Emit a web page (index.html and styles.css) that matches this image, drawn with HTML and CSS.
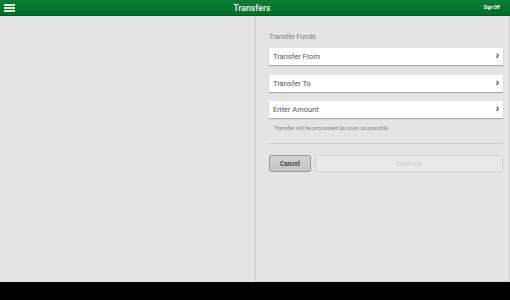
FILE: index.html
```html
<!DOCTYPE html>
<html lang="en">
<head>
  <meta charset="UTF-8" />
  <title>Transfers</title>
  <link rel="stylesheet" href="styles.css">
</head>
<body>
  <div class="screen">
    <header class="topbar">
      <span class="menu-btn">
        <svg width="11" height="8" viewBox="0 0 11 8"><rect x="0" y="0" width="11" height="2" fill="#d8f0d8"/><rect x="0" y="3" width="11" height="2" fill="#d8f0d8"/><rect x="0" y="6" width="11" height="2" fill="#d8f0d8"/></svg>
      </span>
      <h1>Transfers</h1>
      <a class="sign-off" href="#">Sign Off</a>
    </header>

    <main class="panes">
      <section class="pane-left"></section>
      <section class="pane-right">
        <p class="section-label">Transfer Funds</p>
        <ul class="picker-list">
          <li>Transfer From <span class="chev">&#x203A;</span></li>
          <li>Transfer To <span class="chev">&#x203A;</span></li>
          <li>Enter Amount <span class="chev">&#x203A;</span></li>
        </ul>
        <p class="note">Transfer will be processed as soon as possible</p>
        <hr class="rule">
        <div class="actions">
          <button class="btn btn-cancel">Cancel</button>
          <button class="btn btn-continue" disabled>Continue</button>
        </div>
      </section>
    </main>
  </div>
  <div class="bottom-bar"></div>
</body>
</html>
```

FILE: styles.css
```css
body {
  margin: 0;
  width: 510px;
  height: 300px;
  background: #000;
  font-family: Roboto, "Liberation Sans", sans-serif;
  overflow: hidden;
}
.screen {
  height: 282px;
  display: flex;
  flex-direction: column;
  background: #e4e4e4;
}
.topbar {
  height: 15px;
  display: flex;
  align-items: center;
  justify-content: space-between;
  padding: 0 10px 0 4px;
  background: linear-gradient(#0c7d36, #006c2b);
  border-bottom: 1px solid #005a22;
}
.menu-btn {
  display: flex;
  width: 60px;
}
.topbar h1 {
  margin: 0;
  color: #f4fff4;
  font-size: 8.5px;
  font-weight: 500;
  letter-spacing: 0.1px;
}
.sign-off {
  width: 60px;
  text-align: right;
  color: #fff;
  font-size: 4.5px;
  font-weight: bold;
  text-decoration: none;
}
.panes {
  flex: 1;
  display: flex;
}
.pane-left {
  width: 255px;
  border-right: 1px solid #c9c9c9;
}
.pane-right {
  flex: 1;
  padding: 0 6px 0 13px;
  border-right: 1px solid #cfcfcf;
  border-bottom: 1px solid #cfcfcf;
}
.section-label {
  margin: 17px 0 7px;
  font-size: 7px;
  color: #7d7d7d;
}
.picker-list {
  list-style: none;
  margin: 0;
  padding: 0;
  display: flex;
  flex-direction: column;
  gap: 9.5px;
}
.picker-list li {
  height: 17px;
  display: flex;
  align-items: center;
  justify-content: space-between;
  padding: 0 4px;
  background: #fff;
  box-shadow: 0 1px 1px rgba(0,0,0,0.25);
  font-size: 7.5px;
  color: #555;
}
.chev {
  font-size: 11px;
  font-weight: bold;
  color: #222;
  line-height: 1;
  margin-top: -2px;
}
.note {
  margin: 7px 0 0 5px;
  font-size: 5.5px;
  color: #8a8a8a;
}
.rule {
  margin: 12px 0 11px;
  border: 0;
  border-top: 1px solid #cdcdcd;
}
.actions {
  display: flex;
  gap: 4px;
}
.btn {
  height: 17px;
  font-family: Roboto, "Liberation Sans", sans-serif;
  font-size: 6.5px;
  border-radius: 2px;
  padding: 0;
}
.btn-cancel {
  width: 42px;
  background: linear-gradient(#d2d2d2, #c4c4c4);
  border: 1px solid #9a9a9a;
  color: #333;
  font-weight: 500;
}
.btn-continue {
  flex: 1;
  background: #e9e9e9;
  border: 1px solid #d2d2d2;
  color: #cdcdcd;
}
.bottom-bar {
  height: 18px;
  background: #000;
}
```
